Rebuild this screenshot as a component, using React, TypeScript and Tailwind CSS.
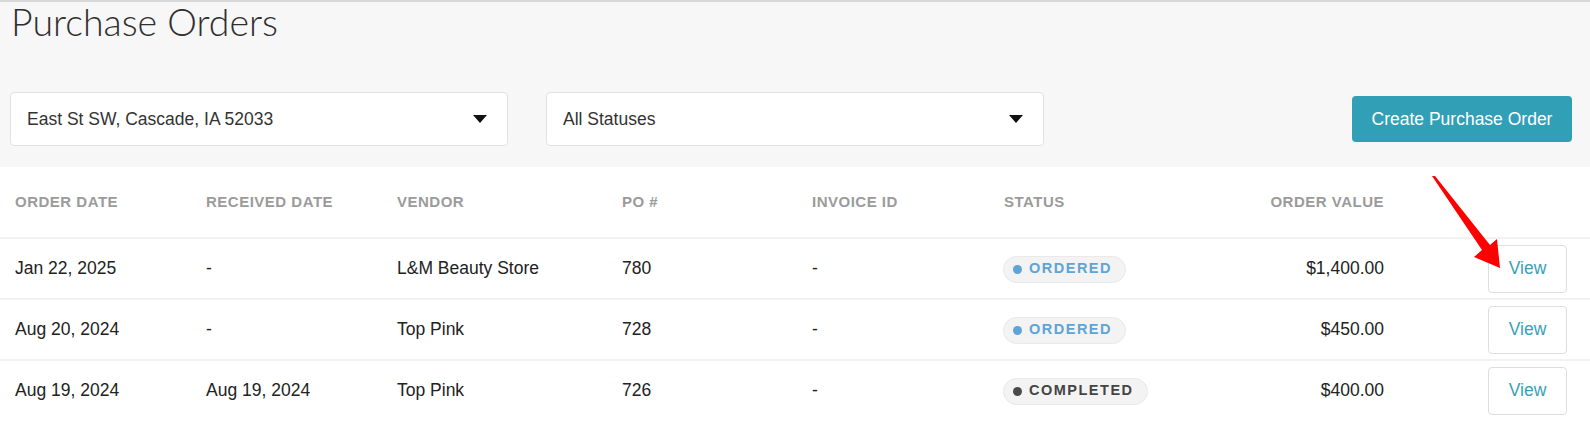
type Order = {
  orderDate: string;
  receivedDate: string;
  vendor: string;
  po: string;
  invoice: string;
  status: "ORDERED" | "COMPLETED";
  value: string;
};

const orders: Order[] = [
  { orderDate: "Jan 22, 2025", receivedDate: "-", vendor: "L&M Beauty Store", po: "780", invoice: "-", status: "ORDERED", value: "$1,400.00" },
  { orderDate: "Aug 20, 2024", receivedDate: "-", vendor: "Top Pink", po: "728", invoice: "-", status: "ORDERED", value: "$450.00" },
  { orderDate: "Aug 19, 2024", receivedDate: "Aug 19, 2024", vendor: "Top Pink", po: "726", invoice: "-", status: "COMPLETED", value: "$400.00" },
];

const cols = "grid grid-cols-[191px_191px_225px_190px_192px_191px_219px_1fr] items-center";

function Caret() {
  return (
    <svg width="14" height="8" viewBox="0 0 14 8" className="shrink-0">
      <path d="M0 0 H14 L7 8 Z" fill="#111" />
    </svg>
  );
}

function SelectBox({ label }: { label: string }) {
  return (
    <div className="flex h-[54px] w-[498px] items-center justify-between rounded-[4px] border border-[#e2e2e2] bg-white pl-4 pr-[20px] text-[17.5px] text-[#333]">
      <span>{label}</span>
      <Caret />
    </div>
  );
}

function StatusPill({ status }: { status: Order["status"] }) {
  const ordered = status === "ORDERED";
  return (
    <span className="inline-flex h-[27px] items-center gap-[7px] rounded-full border border-[#e9e9e9] bg-[#f3f3f3] pl-[9px] pr-[13px]">
      <span className={`h-[9px] w-[9px] rounded-full ${ordered ? "bg-[#5ea4d6]" : "bg-[#4a4a4a]"}`} />
      <span
        className={`text-[14.5px] font-bold tracking-[1.5px] ${ordered ? "text-[#5ea4d6]" : "text-[#444]"}`}
      >
        {status}
      </span>
    </span>
  );
}

export default function App() {
  return (
    <div className="relative w-[1590px] bg-white font-['Liberation_Sans',Arial,sans-serif]">
      <header className="h-[167px] border-t-2 border-[#d8d8d8] bg-[#f7f7f7] px-[10px]">
        <h1 className="pl-px font-['Lato',sans-serif] text-[37.5px] font-light leading-[40px] text-[#2f2f2f]">
          Purchase Orders
        </h1>
        <div className="mt-[50px] flex items-center">
          <SelectBox label="East St SW, Cascade, IA 52033" />
          <div className="w-[38px]" />
          <SelectBox label="All Statuses" />
          <button className="ml-auto mr-[8px] h-[46px] w-[220px] rounded-[4px] bg-[#31a0b6] text-[17.5px] text-white">
            Create Purchase Order
          </button>
        </div>
      </header>

      <div className={`${cols} h-[70px] text-[15px] font-bold uppercase tracking-[0.5px] text-[#9b9b9b]`}>
        <div className="pl-[15px]">Order Date</div>
        <div className="pl-[15px]">Received Date</div>
        <div className="pl-[15px]">Vendor</div>
        <div className="pl-[15px]">PO #</div>
        <div className="pl-[15px]">Invoice ID</div>
        <div className="pl-[15px]">Status</div>
        <div className="pr-[15px] text-right">Order Value</div>
        <div />
      </div>

      {orders.map((o) => (
        <div
          key={o.po}
          className={`${cols} h-[61px] border-t-2 border-[#f2f2f2] text-[17.5px] text-[#222]`}
        >
          <div className="pl-[15px]">{o.orderDate}</div>
          <div className="pl-[15px]">{o.receivedDate}</div>
          <div className="pl-[15px]">{o.vendor}</div>
          <div className="pl-[15px]">{o.po}</div>
          <div className="pl-[15px]">{o.invoice}</div>
          <div className="pl-[14px]">
            <StatusPill status={o.status} />
          </div>
          <div className="pr-[15px] text-right">{o.value}</div>
          <div className="flex justify-end pr-[23px]">
            <button className="h-[48px] w-[79px] rounded-[4px] border border-[#dedede] bg-white text-[17.5px] text-[#3a9fb8]">
              View
            </button>
          </div>
        </div>
      ))}

      <svg
        className="pointer-events-none absolute left-[1420px] top-[170px]"
        width="90"
        height="105"
        viewBox="0 0 90 105"
      >
        <polygon points="12,6 15,6 70,75 77,69 80,98 54,87 62,80" fill="#f00" />
      </svg>
    </div>
  );
}
